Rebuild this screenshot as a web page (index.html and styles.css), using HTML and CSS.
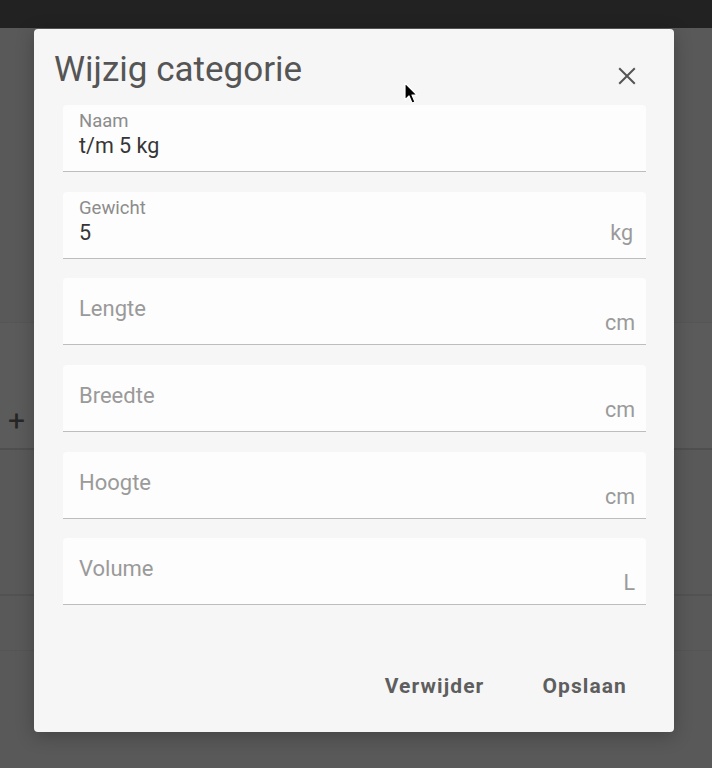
FILE: index.html
```html
<!DOCTYPE html>
<html lang="nl">
<head>
<meta charset="utf-8">
<title>Wijzig categorie</title>
<link rel="stylesheet" href="styles.css">
</head>
<body>
<div class="page">
  <header class="topbar"></header>
  <main class="content">
    <div class="row row-a"></div>
    <div class="row row-b"><span class="plus">+</span></div>
    <div class="row row-c"></div>
    <div class="row row-d"></div>
  </main>
</div>

<div class="dialog" role="dialog">
  <div class="dialog-head">
    <h2 class="title">Wijzig categorie</h2>
    <button class="close" aria-label="Sluiten">
      <svg viewBox="0 0 24 24" width="22" height="22"><path d="M3.5 3.5 L20.5 20.5 M20.5 3.5 L3.5 20.5" stroke="#555" stroke-width="2.2" fill="none"/></svg>
    </button>
  </div>
  <div class="fields">
    <div class="field filled">
      <span class="label">Naam</span>
      <div class="value-row"><span class="value">t/m 5 kg</span></div>
    </div>
    <div class="field filled">
      <span class="label">Gewicht</span>
      <div class="value-row"><span class="value">5</span><span class="suffix">kg</span></div>
    </div>
    <div class="field empty">
      <span class="placeholder">Lengte</span>
      <span class="suffix">cm</span>
    </div>
    <div class="field empty">
      <span class="placeholder">Breedte</span>
      <span class="suffix">cm</span>
    </div>
    <div class="field empty">
      <span class="placeholder">Hoogte</span>
      <span class="suffix">cm</span>
    </div>
    <div class="field empty">
      <span class="placeholder">Volume</span>
      <span class="suffix">L</span>
    </div>
  </div>
  <div class="actions">
    <button class="btn">Verwijder</button>
    <button class="btn">Opslaan</button>
  </div>
</div>

<svg class="cursor" width="16" height="24" viewBox="0 0 16 24"><path d="M1 1 L1 18 L5 14 L8 21 L11 20 L8 13 L13 13 Z" fill="#000" stroke="#fff" stroke-width="1.2" stroke-linejoin="round"/></svg>
</body>
</html>
```
FILE: styles.css
```css
html, body {
  margin: 0;
  padding: 0;
}
body {
  width: 712px;
  height: 768px;
  overflow: hidden;
  background: #595959;
  font-family: Roboto, "Liberation Sans", sans-serif;
  position: relative;
}
.page {
  display: flex;
  flex-direction: column;
  height: 768px;
}
.topbar {
  height: 28px;
  background: #222222;
  flex: none;
}
.content {
  display: flex;
  flex-direction: column;
  flex: 1;
}
.row-a {
  height: 294px;
  border-bottom: 1px solid #565656;
}
.row-b {
  height: 127px;
  background: #5b5b5b;
  border-bottom: 2px solid #4f4f4f;
  display: flex;
  align-items: flex-end;
  padding-bottom: 12px;
  box-sizing: border-box;
}
.plus {
  color: #262626;
  font-size: 30px;
  line-height: 1;
  margin-left: 8px;
  font-weight: 400;
}
.row-c {
  height: 144px;
  border-bottom: 2px solid #525252;
}
.row-d {
  height: 54px;
  border-bottom: 1px solid #555555;
}

.dialog {
  position: absolute;
  left: 34px;
  top: 29px;
  width: 640px;
  height: 703px;
  background: #f6f6f6;
  border-radius: 4px;
  box-sizing: border-box;
  display: flex;
  flex-direction: column;
  box-shadow: 0 4px 18px rgba(0,0,0,0.25);
}
.dialog-head {
  display: flex;
  align-items: center;
  justify-content: space-between;
  padding: 6px 31px 0 20px;
  height: 76px;
  box-sizing: border-box;
}
.title {
  margin: 0;
  font-size: 35px;
  font-weight: 400;
  color: #555555;
  line-height: 44px;
  letter-spacing: 0;
}
.close {
  background: none;
  border: 0;
  padding: 0;
  width: 32px;
  height: 32px;
  display: flex;
  align-items: center;
  justify-content: center;
  margin-top: 12px;
}
.fields {
  display: flex;
  flex-direction: column;
  gap: 19.7px;
  padding: 0 28px 0 29px;
}
.field {
  height: 67px;
  box-sizing: border-box;
  background: #fdfdfd;
  border-radius: 4px 4px 0 0;
  border-bottom: 1.5px solid #bdbdbd;
  padding: 0 11px 0 16px;
  display: flex;
  position: relative;
}
.field.filled {
  flex-direction: column;
  justify-content: flex-start;
  padding-top: 6px;
}
.label {
  font-size: 18.5px;
  color: #8c8c8c;
  line-height: 20px;
}
.value-row {
  display: flex;
  align-items: baseline;
  justify-content: space-between;
  margin-top: 2px;
}
.value {
  font-size: 21.5px;
  color: #353535;
  line-height: 26px;
}
.field.filled .suffix {
  margin-right: 2px;
}
.field.empty {
  justify-content: space-between;
  align-items: flex-start;
}
.placeholder {
  font-size: 22px;
  color: #9a9a9a;
  line-height: 26px;
  margin-top: 18px;
}
.suffix {
  font-size: 21.5px;
  color: #9a9a9a;
  line-height: 26px;
}
.field.empty .suffix {
  margin-top: 32px;
}
.actions {
  margin-top: auto;
  display: flex;
  justify-content: flex-end;
  gap: 20px;
  padding: 0 28px 24px 0;
}
.btn {
  background: none;
  border: 0;
  font-family: Roboto, "Liberation Sans", sans-serif;
  font-weight: 700;
  font-size: 21px;
  color: #5e5e5e;
  padding: 0 19px;
  height: 44px;
  letter-spacing: 1.1px;
}
.cursor {
  position: absolute;
  left: 404px;
  top: 82px;
}
```
